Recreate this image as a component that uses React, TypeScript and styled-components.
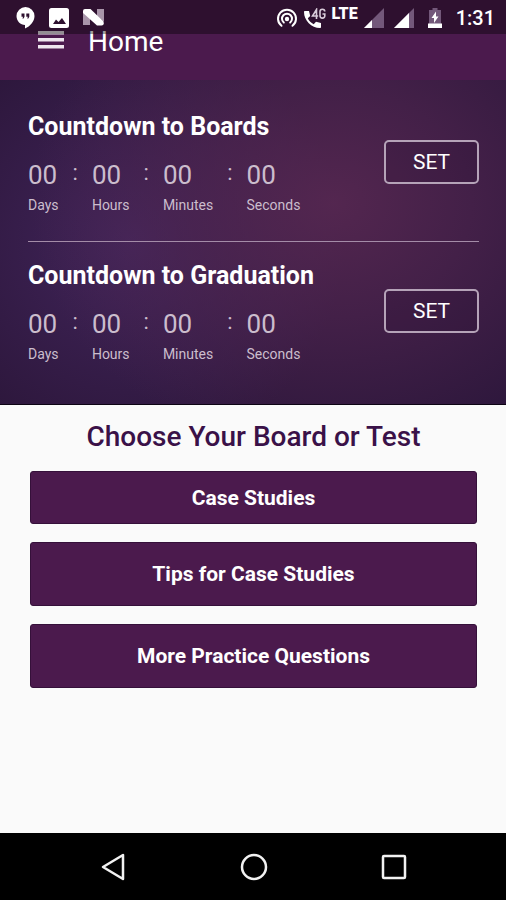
import React from "react";
import styled, { createGlobalStyle } from "styled-components";

const GlobalStyle = createGlobalStyle`
  *, *::before, *::after { box-sizing: border-box; }
  body {
    margin: 0;
    background: #fafafa;
    font-family: Roboto, "Liberation Sans", sans-serif;
  }
  h1, h2, p { margin: 0; }
  button { font-family: inherit; cursor: pointer; margin: 0; }
  svg { display: block; flex: none; }
`;

const Screen = styled.div`
  min-height: 100vh;
  display: flex;
  flex-direction: column;
  position: relative;
`;

const StatusBar = styled.div`
  position: absolute;
  inset: 0 0 auto 0;
  height: 34px;
  padding: 2px 11px 0 16px;
  display: flex;
  align-items: center;
  justify-content: space-between;
  background: rgba(0, 0, 0, 0.38);
  color: #fff;
`;

const StatusGroup = styled.div<{ $gap: number }>`
  display: flex;
  align-items: center;
  gap: ${(p) => p.$gap}px;
`;

const NetworkLabel = styled.span`
  font-size: 16px;
  line-height: 16px;
  font-weight: 900;
  padding-bottom: 8px;
`;

const Clock = styled.time`
  font-size: 20px;
  line-height: 24px;
  font-weight: 500;
`;

const AppBar = styled.header`
  height: 80px;
  padding: 0 36px 23px;
  display: flex;
  align-items: flex-end;
  gap: 22px;
  background: #4b1a4d;
  color: #fff;
`;

const MenuButton = styled.button`
  width: 30px;
  height: 28px;
  padding: 0;
  border: 0;
  background: none;
  color: #eee6ee;
`;

const AppTitle = styled.h1`
  font-size: 28px;
  line-height: 30px;
  font-weight: 400;
`;

const Hero = styled.section`
  padding: 31px 27px 42px 28px;
  border-bottom: 1px solid #0d0414;
  color: #fff;
  background:
    radial-gradient(ellipse 60% 78% at 66% 38%, rgba(90, 41, 83, 0.85), rgba(82, 38, 80, 0.6) 45%, rgba(60, 28, 72, 0) 100%),
    radial-gradient(ellipse 42% 66% at 26% 50%, rgba(70, 40, 98, 0.8), rgba(55, 30, 80, 0) 100%),
    #2d173c;
`;

const Countdown = styled.div`
  display: flex;
  align-items: center;
  justify-content: space-between;

  & + & {
    margin-top: 28px;
    padding-top: 18px;
    border-top: 1px solid #a48ca8;
  }
`;

const CountdownTitle = styled.h2`
  font-size: 25px;
  line-height: 32px;
  font-weight: 700;
`;

const Units = styled.div`
  display: flex;
  gap: 14px;
  margin-top: 16px;
  color: #cbbdcd;
`;

const Unit = styled.div`
  display: flex;
  flex-direction: column;
  gap: 6px;
`;

const UnitValue = styled.span`
  font-size: 26px;
  line-height: 32px;
`;

const UnitLabel = styled.span`
  font-size: 14px;
  line-height: 16px;
`;

const Colon = styled.span`
  font-size: 22px;
  line-height: 28px;
`;

const SetButton = styled.button`
  width: 95px;
  height: 44px;
  padding: 0;
  border: 2px solid #b5a3b8;
  border-radius: 5px;
  background: rgba(40, 14, 50, 0.2);
  color: #fff;
  font-size: 21px;
  line-height: 24px;
`;

const Choices = styled.main`
  flex: 1;
  display: flex;
  flex-direction: column;
  gap: 18px;
  padding: 15px 29px 18px 30px;
`;

const ChoicesTitle = styled.h2`
  font-size: 28px;
  line-height: 33px;
  font-weight: 500;
  text-align: center;
  color: #3a1148;
`;

const ChoiceButton = styled.button<{ $compact?: boolean }>`
  height: ${(p) => (p.$compact ? 53 : 64)}px;
  padding: 0 16px;
  border: 1px solid #35103a;
  border-radius: 3px;
  background: #4b1a4d;
  color: #fff;
  font-size: 21px;
  line-height: 26px;
  font-weight: 700;
`;

const NavBar = styled.nav`
  height: 67px;
  padding: 0 98px 0 99px;
  display: flex;
  align-items: center;
  justify-content: space-between;
  background: #000;
`;

const NavButton = styled.button`
  padding: 0;
  border: 0;
  background: none;
`;

const HangoutsIcon = () => (
  <svg width="19" height="22" viewBox="0 0 19 22" aria-hidden="true">
    <path fill="#fff" d="M9.500 0A9 9 0 0 0 .5 9c0 5 4 9 8.500 9v3.500c5-2.200 9.500-7 9.500-12.500A9 9 0 0 0 9.500 0z" />
    <path fill="#2e102f" d="M5.500 6.500h3v3.200L7.500 11.500H6.400l.7-1.800H5.500zM10.300 6.500h3v3.200l-1 1.800h-1.100l.7-1.800h-1.600z" />
  </svg>
);

const GalleryIcon = () => (
  <svg width="20" height="20" viewBox="0 0 20 20" aria-hidden="true">
    <rect width="20" height="20" rx="2.500" fill="#fff" />
    <path fill="#2e102f" d="M4 16l3-4.500 2.500 2.500 3.500-4 4 6z" />
  </svg>
);

const NougatIcon = () => (
  <svg width="22" height="18" viewBox="0 0 22 18" aria-hidden="true">
    <path fill="#a995aa" d="M0 3l7 6v7H0zM14 0h7v13l-7-6z" />
    <path fill="#fff" d="M0 2Q0 0 2 0h5.500L20 12q1.500 2 .5 3.500-.8.900-2 .9h-4.500L0 4z" />
  </svg>
);

const HotspotIcon = () => (
  <svg width="22" height="20" viewBox="0 0 22 20" fill="none" stroke="#fff" strokeWidth="2" strokeLinecap="round" aria-hidden="true">
    <path d="M5.500 17.800A9 9 0 1 1 16.500 17.800" />
    <path d="M7.800 14.500A5 5 0 1 1 14.200 14.500" />
    <circle cx="11" cy="11" r="2.200" fill="#fff" stroke="none" />
  </svg>
);

const CallIcon = () => (
  <svg width="22" height="20" viewBox="0 0 22 20" aria-hidden="true">
    <path fill="#fff" d="M1 3h4l1.200 5-2.400 2.300c1.300 2.700 3.200 4.600 5.900 5.900L12 13.800l5 1.200v4c0 .6-.4 1-1 1C7.500 20 0 12.500 0 4c0-.6.400-1 1-1z" />
    <path fill="none" stroke="#d9ccda" strokeWidth="1.600" d="M12.500 11V1.500L8.500 8h5.700M20.800 3.500C20.800.4 16 .4 16 3.500v4.300c0 3.100 4.800 3.100 4.800 0V6h-2.300" />
  </svg>
);

const SignalIcon = ({ level }: { level: number }) => (
  <svg width="20" height="20" viewBox="0 0 20 20" aria-hidden="true">
    <path fill="#73587a" d="M20 0v20H0z" />
    <path fill="#fff" d={`M0 20L${level} ${20 - level}V20z`} />
  </svg>
);

const BatteryIcon = () => (
  <svg width="14" height="20" viewBox="0 0 14 20" aria-hidden="true">
    <path fill="#73587a" d="M4.500 0h5v2H13v18H1V2h3.500z" />
    <path fill="#fff" d="M0 15.500h14V20H0zM8 3.500L3.500 10H6v5l4.500-6.500H8z" />
  </svg>
);

const MenuIcon = () => (
  <svg width="30" height="28" viewBox="0 0 30 28" fill="currentColor" aria-hidden="true">
    <path d="M2 2h26v3.500H2zM2 9h26v3.500H2zM2 16h26v3.500H2z" />
  </svg>
);

const BackIcon = () => (
  <svg width="28" height="28" viewBox="0 0 28 28" fill="none" stroke="#f2f2f2" strokeWidth="2.500" aria-hidden="true">
    <path strokeLinejoin="round" d="M24 2v24L4 14z" />
  </svg>
);

const HomeIcon = () => (
  <svg width="28" height="28" viewBox="0 0 28 28" fill="none" stroke="#f2f2f2" strokeWidth="2.500" aria-hidden="true">
    <circle cx="14" cy="14" r="12" />
  </svg>
);

const RecentsIcon = () => (
  <svg width="28" height="28" viewBox="0 0 28 28" fill="none" stroke="#f2f2f2" strokeWidth="2.500" aria-hidden="true">
    <rect x="3" y="3" width="22" height="22" rx="1" />
  </svg>
);

const unitNames = ["Days", "Hours", "Minutes", "Seconds"];

const CountdownRow = ({ title }: { title: string }) => (
  <Countdown>
    <div>
      <CountdownTitle>{title}</CountdownTitle>
      <Units>
        {unitNames.map((name, i) => (
          <React.Fragment key={name}>
            {i > 0 && <Colon>:</Colon>}
            <Unit>
              <UnitValue>00</UnitValue>
              <UnitLabel>{name}</UnitLabel>
            </Unit>
          </React.Fragment>
        ))}
      </Units>
    </div>
    <SetButton type="button">SET</SetButton>
  </Countdown>
);

export default function App() {
  return (
    <>
      <GlobalStyle />
      <Screen>
        <AppBar>
          <MenuButton type="button" aria-label="Menu">
            <MenuIcon />
          </MenuButton>
          <AppTitle>Home</AppTitle>
        </AppBar>
        <StatusBar>
          <StatusGroup $gap={14}>
            <HangoutsIcon />
            <GalleryIcon />
            <NougatIcon />
          </StatusGroup>
          <StatusGroup $gap={10}>
            <StatusGroup $gap={6}>
              <HotspotIcon />
              <CallIcon />
              <NetworkLabel>LTE</NetworkLabel>
              <SignalIcon level={8} />
            </StatusGroup>
            <StatusGroup $gap={14}>
              <SignalIcon level={15} />
              <BatteryIcon />
              <Clock>1:31</Clock>
            </StatusGroup>
          </StatusGroup>
        </StatusBar>
        <Hero>
          <CountdownRow title="Countdown to Boards" />
          <CountdownRow title="Countdown to Graduation" />
        </Hero>
        <Choices>
          <ChoicesTitle>Choose Your Board or Test</ChoicesTitle>
          <ChoiceButton type="button" $compact>
            Case Studies
          </ChoiceButton>
          <ChoiceButton type="button">Tips for Case Studies</ChoiceButton>
          <ChoiceButton type="button">More Practice Questions</ChoiceButton>
        </Choices>
        <NavBar>
          <NavButton type="button" aria-label="Back">
            <BackIcon />
          </NavButton>
          <NavButton type="button" aria-label="Home screen">
            <HomeIcon />
          </NavButton>
          <NavButton type="button" aria-label="Recent apps">
            <RecentsIcon />
          </NavButton>
        </NavBar>
      </Screen>
    </>
  );
}
